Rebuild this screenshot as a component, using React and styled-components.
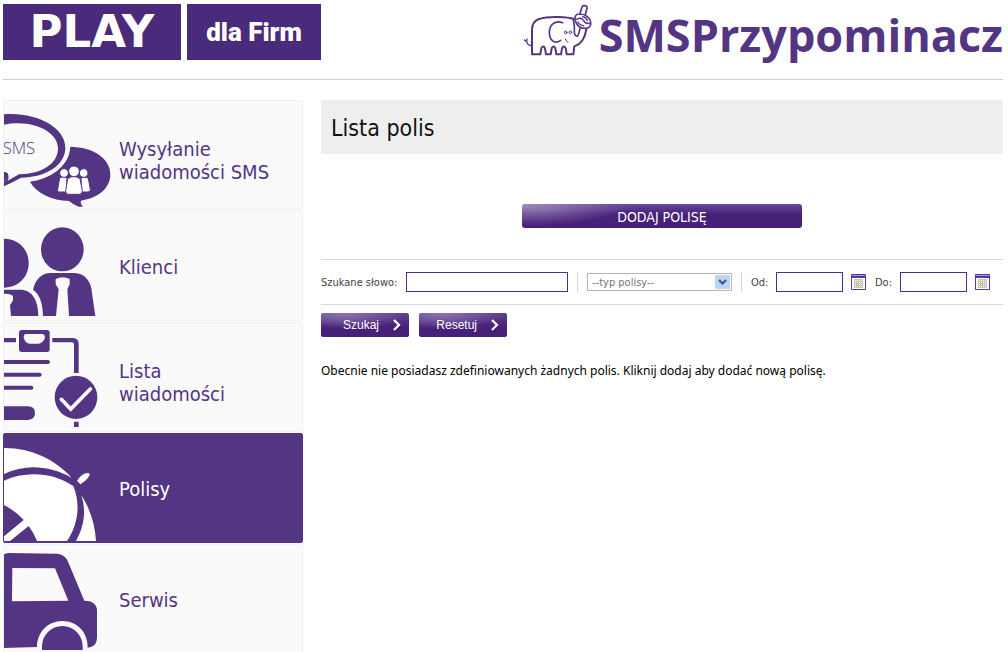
import React from "react";
import styled, { createGlobalStyle, css } from "styled-components";

const purple = "#543584";
const logoPurple = "#4a2a7a";
const ui = `"DejaVu Sans Condensed", "DejaVu Sans", sans-serif`;

const GlobalStyle = createGlobalStyle`
  * { box-sizing: border-box; }
  body { margin: 0; background: #fff; font-family: ${ui}; }
  button, input, select { font: inherit; }
`;

const Page = styled.div`
  padding: 4px 5px 0 3px;
`;
const Header = styled.header`
  display: flex;
  justify-content: space-between;
  height: 76px;
  border-bottom: 1px solid #ccc;
`;
const Logo = styled.a`
  display: flex;
  gap: 6px;
  height: 56px;
  color: #fff;
  text-decoration: none;
`;
const LogoBlock = styled.span`
  display: flex;
  align-items: center;
  justify-content: center;
  background: ${logoPurple};
  ${(p) =>
    p.$brand
      ? css`
          width: 178px;
          font: bold 45px/56px "DejaVu Sans", sans-serif;
        `
      : css`
          width: 134px;
          font: 900 26px/56px Roboto, sans-serif;
        `}
`;
const Product = styled.div`
  display: flex;
  gap: 4px;
  color: ${purple};
  font: bold 45px/62px "Open Sans", sans-serif;
`;
const Elephant = styled.svg`
  width: 72px;
  height: 56px;
`;
const Body = styled.div`
  display: flex;
  align-items: flex-start;
  gap: 18px;
  padding-top: 20px;
`;
const Sidebar = styled.nav`
  display: flex;
  flex-direction: column;
  flex: none;
  gap: 1px;
  width: 300px;
`;
const MenuItem = styled.a`
  display: flex;
  align-items: center;
  gap: 5px;
  height: 110px;
  border: 1px solid ${(p) => (p.$active ? purple : "#f0f0f0")};
  border-radius: 2px;
  background: ${(p) => (p.$active ? purple : "#fafafa")};
  color: ${(p) => (p.$active ? "#fff" : purple)};
  font-size: 20px;
  line-height: 23px;
  text-decoration: none;
`;
const MenuIcon = styled.svg`
  flex: none;
  width: 110px;
  height: 108px;
`;
const MenuLabel = styled.span`
  padding-top: ${(p) => (p.$twoLines ? "11px" : "2px")};
  white-space: pre-line;
`;
const Main = styled.main`
  flex: 1;
  min-width: 0;
`;
const Title = styled.h1`
  margin: 0 0 50px;
  padding: 2px 10px 0;
  background: #eee;
  color: #111;
  font-size: 23px;
  font-weight: normal;
  line-height: 52px;
`;
const AddButton = styled.button`
  display: block;
  width: 280px;
  height: 24px;
  margin: 0 auto 31px;
  padding: 2px 0 0;
  border: 0;
  border-radius: 3px;
  background:
    radial-gradient(ellipse 110px 22px at 0 0, #a08cbc, transparent),
    linear-gradient(#69489a, #472078 45%);
  color: #fff;
  font-size: 14px;
  line-height: 22px;
`;
const Filters = styled.div`
  display: flex;
  align-items: center;
  height: 46px;
  border: solid #d9d9d9;
  border-width: 1px 0;
  color: #444;
  font-size: 11px;
`;
const FilterGroup = styled.div`
  display: flex;
  align-items: center;
  height: 20px;
  padding-right: 9px;
  & + & {
    padding-left: 9px;
    border-left: 1px solid #d9d9d9;
  }
`;
const FieldLabel = styled.label`
  width: ${(p) => (p.$wide ? "85px" : "25px")};
  white-space: nowrap;
`;
const TextInput = styled.input`
  width: ${(p) => (p.$wide ? "162px" : "67px")};
  height: 20px;
  padding: 0 4px;
  border: 1px solid #532c8a;
  background: #fff;
`;
const SelectBox = styled.div`
  position: relative;
  width: 145px;
  height: 18px;
`;
const Select = styled.select`
  display: block;
  width: 100%;
  height: 100%;
  padding: 0 20px 0 4px;
  appearance: none;
  border: 1px solid #b5b5b5;
  border-radius: 0;
  background: #fff;
  color: #777;
`;
const SelectArrow = styled.svg`
  position: absolute;
  top: 2px;
  right: 2px;
  width: 15px;
  height: 14px;
  pointer-events: none;
`;
const IconButton = styled.button`
  width: 15px;
  height: 16px;
  margin: 0 9px 0 8px;
  padding: 0;
  border: 0;
  background: none;
  svg { display: block; }
`;
const Actions = styled.div`
  display: flex;
  gap: 10px;
  padding: 8px 0 24px;
`;
const ActionButton = styled.button`
  display: flex;
  align-items: center;
  justify-content: flex-end;
  gap: 14px;
  width: 88px;
  height: 24px;
  padding: 0 7px 0 0;
  border: 0;
  border-radius: 2px;
  background:
    radial-gradient(ellipse 60px 16px at 24px 0, #8d75b0, transparent),
    linear-gradient(#62418f, #472078 60%);
  color: #fff;
  font-family: "Liberation Sans", sans-serif;
  font-size: 12px;
`;
const Message = styled.p`
  margin: 0;
  color: #000;
  font-family: "Noto Sans", sans-serif;
  font-size: 12px;
  line-height: 20px;
`;

function CalendarIcon() {
  const dots = [];
  for (let r = 0; r < 4; r++)
    for (let c = 0; c < 4; c++)
      dots.push(
        <rect key={`${r}${c}`} x={4 + c * 2} y={6 + r * 2} width="1" height="1" fill={r === 2 && c === 1 ? "#ffe34d" : "#fff"} />
      );
  return (
    <svg width="15" height="16" viewBox="0 0 15 16" aria-hidden="true">
      <rect width="15" height="16" rx="1" fill="#5a35a0" />
      <rect x="1" y="1" width="13" height="1" fill="#aa95d8" />
      <rect x="1" y="4" width="13" height="11" fill="#fff" />
      <rect x="3" y="5" width="9" height="9" fill="#c4c4c4" />
      <rect x="5" y="9" width="3" height="3" fill="#d9bd54" />
      {dots}
    </svg>
  );
}

function Chevron() {
  return (
    <svg width="9" height="14" viewBox="0 0 9 14" fill="none" aria-hidden="true">
      <path d="M2 3l5 5-5 5" stroke="#2c1156" strokeWidth="2" />
      <path d="M1 2l5 5-5 5" stroke="#fff" strokeWidth="2.4" />
    </svg>
  );
}

const icons = {
  sms: (
    <MenuIcon viewBox="12 18 330 324" fill={purple} aria-hidden="true">
      <path d="M211 155C280 156 331 190 331 238C331 281 293 310 243 317Q240 326 249 335H236Q221 330 207 318C155 316 109 295 90 260C153 251 208 213 211 155Z" />
      <path d="M12 58C110 50 196 98 196 158C196 211 137 247 63 248Q38 262 12 274V261Q30 248 12 230Z" />
      <path d="M12 89C96 72 174 109 174 160C174 206 127 237 57 238Q37 250 23 257Q32 236 12 230Z" fill="#fafafa" />
      <path d="M12 231Q31 233 22 249Q18 257 12 261Z" />
      <text x="8" y="178" fontFamily="Open Sans" fontSize="50" fontWeight="300">SMS</text>
      <g fill="#fff" stroke={purple} strokeWidth="3">
        <path d="M179 248Q190 243 201 248L199 291H177Q171 291 173 283Z" />
        <path d="M243 248Q255 243 265 250L271 283Q272 291 264 291H245Z" />
        <circle cx="192" cy="234" r="13" />
        <circle cx="251" cy="234" r="13" />
        <path d="M203 251Q222 238 240 251L247 287Q247 298 237 298H206Q196 298 197 287Z" />
        <circle cx="222" cy="229" r="16" />
      </g>
    </MenuIcon>
  ),
  clients: (
    <MenuIcon viewBox="12 12 330 324" fill={purple} aria-hidden="true">
      <path d="M12 92C55 92 86 123 86 166C86 207 55 239 12 239Z" />
      <ellipse cx="187" cy="124" rx="64" ry="66" />
      <path d="M12 245H60C96 245 115 276 115 324H33L30 292L39 277V263Q28 256 12 257Z" />
      <path d="M99 245C106 213 127 195 151 195H224C253 195 275 221 276 255L286 324H207L202 244L209 229V213Q188 202 167 213V229L176 244L168 324H129C128 285 119 259 99 245Z" />
    </MenuIcon>
  ),
  list: (
    <MenuIcon viewBox="12 9 330 324" fill={purple} aria-hidden="true">
      <path d="M12 54H48V67H12ZM157 54H218Q236 54 236 73V159H222V73Q222 67 216 67H157Z" />
      <path fillRule="evenodd" d="M65 30H141Q149 30 149 38V88Q149 96 141 96H65Q57 96 57 88V38Q57 30 65 30ZM78 42Q71 43 71 52Q75 71 90 71H116Q130 70 135 52Q134 42 126 42Z" />
      <path d="M12 126H144M12 164H119M12 203H94" stroke={purple} strokeWidth="12" strokeLinecap="round" />
      <path d="M12 259H84Q105 260 105 279T84 300H12ZM222 305H236V321H222Z" />
      <ellipse cx="228" cy="232" rx="64" ry="65" />
      <path d="M184 238L212 267L271 207" fill="none" stroke="#fff" strokeWidth="11" strokeLinecap="round" />
    </MenuIcon>
  ),
  policy: (
    <MenuIcon viewBox="12 12 330 324" fill="#fff" aria-hidden="true">
      <path d="M12 54C90 53 166 88 215 143C150 107 77 101 12 132Z" />
      <path d="M12 152C77 123 156 126 220 168C242 222 235 283 201 333H111Q101 308 86 288L30 333H12V319L71 270Q47 243 12 225Z" />
      <path d="M244 196C270 236 285 282 288 333H228C253 289 259 242 244 196ZM231 152Q245 130 264 129Q272 129 267 139Q260 152 241 163Z" />
    </MenuIcon>
  ),
  service: (
    <MenuIcon viewBox="12 15 330 324" fill={purple} aria-hidden="true">
      <path fillRule="evenodd" d="M12 43L24 39L170 41C189 42 201 54 206 70L253 182C276 182 290 192 291 209V294Q290 321 263 323C264 276 230 243 187 243C144 243 111 277 111 321L12 324ZM37 84L36 184L205 182L165 85Z" />
      <path d="M126 330V319A61 61 0 0 1 248 319V330Z" />
    </MenuIcon>
  ),
};

const menu = [
  { icon: "sms", label: "Wysyłanie\nwiadomości SMS" },
  { icon: "clients", label: "Klienci" },
  { icon: "list", label: "Lista\nwiadomości" },
  { icon: "policy", label: "Polisy", active: true },
  { icon: "service", label: "Serwis" },
];

function ElephantLogo() {
  return (
    <Elephant viewBox="25 12 216 168" fill="none" stroke={purple} strokeWidth="6" strokeLinejoin="round" strokeLinecap="round" aria-hidden="true">
      <path d="M178 57C160 51 105 47 73 57Q52 64 52 90V163H77L80 145Q86 134 91 145L94 163H108L111 145Q117 134 122 145L125 163H139L142 145Q148 134 153 145L156 163H176L179 139C202 132 212 108 215 88" />
      <path d="M176 60Q181 80 179 98Q181 110 189 108Q193 100 196 86" strokeWidth="5" />
      <path d="M52 136Q40 139 36 125L29 120M36 125L37 117" strokeWidth="4" />
      <path d="M144 68C119 59 104 77 104 97C104 121 119 134 138 121" strokeWidth="5" />
      <circle cx="153" cy="97" r="4" strokeWidth="3" />
      <circle cx="167" cy="97" r="4" strokeWidth="3" />
      <path d="M152 116Q154 124 160 128" strokeWidth="3" />
      <path d="M196 41L202 21Q204 16 210 17Q218 18 217 24L212 44" strokeWidth="5" />
      <path d="M196 42C183 41 178 51 182 62C186 77 197 84 210 85C223 86 230 77 228 67C227 54 213 42 196 42Z" strokeWidth="5" />
      <path d="M185 58Q200 50 206 61Q213 73 227 70" strokeWidth="4" />
      <path d="M190 66Q195 77 207 77M204 50Q215 52 218 62" strokeWidth="4" />
    </Elephant>
  );
}

function DateField({ id, label }) {
  return (
    <>
      <FieldLabel htmlFor={id}>{label}</FieldLabel>
      <TextInput id={id} type="text" />
      <IconButton type="button" aria-label={`Kalendarz ${label}`}>
        <CalendarIcon />
      </IconButton>
    </>
  );
}

export default function App() {
  return (
    <Page>
      <GlobalStyle />
      <Header>
        <Logo href="#">
          <LogoBlock $brand>PLAY</LogoBlock>
          <LogoBlock>dla Firm</LogoBlock>
        </Logo>
        <Product>
          <ElephantLogo />
          <span>SMSPrzypominacz</span>
        </Product>
      </Header>
      <Body>
        <Sidebar>
          {menu.map((m) => (
            <MenuItem key={m.label} href="#" $active={m.active}>
              {icons[m.icon]}
              <MenuLabel $twoLines={m.label.includes("\n")}>{m.label}</MenuLabel>
            </MenuItem>
          ))}
        </Sidebar>
        <Main>
          <Title>Lista polis</Title>
          <AddButton type="button">DODAJ POLISĘ</AddButton>
          <Filters>
            <FilterGroup>
              <FieldLabel $wide htmlFor="word">Szukane słowo:</FieldLabel>
              <TextInput $wide id="word" type="text" />
            </FilterGroup>
            <FilterGroup>
              <SelectBox>
                <Select aria-label="Typ polisy">
                  <option>--typ polisy--</option>
                </Select>
                <SelectArrow viewBox="0 0 15 14" aria-hidden="true">
                  <rect width="15" height="14" rx="1" fill="#bdd3fb" />
                  <path d="M4 5l3.5 3.5L11 5" fill="none" stroke="#4a6185" strokeWidth="2.4" />
                </SelectArrow>
              </SelectBox>
            </FilterGroup>
            <FilterGroup>
              <DateField id="from" label="Od:" />
              <DateField id="to" label="Do:" />
            </FilterGroup>
          </Filters>
          <Actions>
            <ActionButton type="button">Szukaj<Chevron /></ActionButton>
            <ActionButton type="button">Resetuj<Chevron /></ActionButton>
          </Actions>
          <Message>Obecnie nie posiadasz zdefiniowanych żadnych polis. Kliknij dodaj aby dodać nową polisę.</Message>
        </Main>
      </Body>
    </Page>
  );
}
